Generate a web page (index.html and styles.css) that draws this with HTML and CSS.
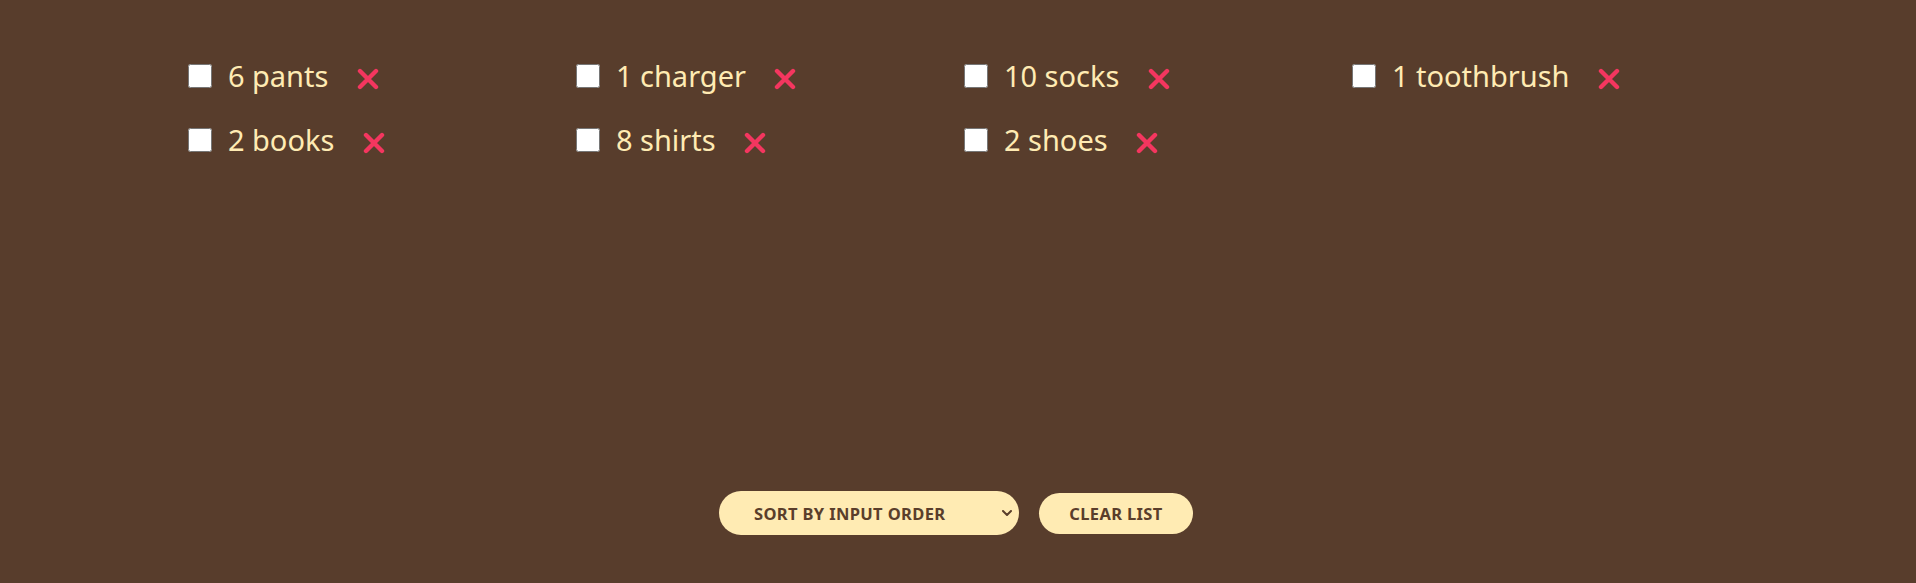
FILE: index.html
```html
<!DOCTYPE html>
<html lang="en">
<head>
<meta charset="utf-8">
<title>Far Away</title>
<link rel="stylesheet" href="styles.css">
</head>
<body>
<div class="list">
  <ul class="items">
    <li class="item"><input type="checkbox" class="check"><span class="label">6 pants</span><button class="remove" aria-label="remove"><svg class="x" viewBox="0 0 22 22"><path d="M3 3 L19 19 M19 3 L3 19"/></svg></button></li>
    <li class="item"><input type="checkbox" class="check"><span class="label">1 charger</span><button class="remove" aria-label="remove"><svg class="x" viewBox="0 0 22 22"><path d="M3 3 L19 19 M19 3 L3 19"/></svg></button></li>
    <li class="item"><input type="checkbox" class="check"><span class="label">10 socks</span><button class="remove" aria-label="remove"><svg class="x" viewBox="0 0 22 22"><path d="M3 3 L19 19 M19 3 L3 19"/></svg></button></li>
    <li class="item"><input type="checkbox" class="check"><span class="label">1 toothbrush</span><button class="remove" aria-label="remove"><svg class="x" viewBox="0 0 22 22"><path d="M3 3 L19 19 M19 3 L3 19"/></svg></button></li>
    <li class="item"><input type="checkbox" class="check"><span class="label">2 books</span><button class="remove" aria-label="remove"><svg class="x" viewBox="0 0 22 22"><path d="M3 3 L19 19 M19 3 L3 19"/></svg></button></li>
    <li class="item"><input type="checkbox" class="check"><span class="label">8 shirts</span><button class="remove" aria-label="remove"><svg class="x" viewBox="0 0 22 22"><path d="M3 3 L19 19 M19 3 L3 19"/></svg></button></li>
    <li class="item"><input type="checkbox" class="check"><span class="label">2 shoes</span><button class="remove" aria-label="remove"><svg class="x" viewBox="0 0 22 22"><path d="M3 3 L19 19 M19 3 L3 19"/></svg></button></li>
  </ul>
  <div class="actions">
    <div class="select-wrap">
      <select class="sort">
        <option>Sort by input order</option>
        <option>Sort by description</option>
        <option>Sort by packed status</option>
      </select>
      <svg class="chevron" viewBox="0 0 10 6"><path d="M1 1 L5 5 L9 1"/></svg>
    </div>
    <button class="clear">Clear list</button>
  </div>
</div>
</body>
</html>
```

FILE: styles.css
```css
* {
  box-sizing: border-box;
  margin: 0;
  padding: 0;
}

html, body {
  height: 100%;
}

body {
  background-color: #583d2c;
  font-family: "Noto Sans", "Open Sans", sans-serif;
  color: #ffebb3;
  overflow: hidden;
}

.list {
  height: 100%;
  display: flex;
  flex-direction: column;
  justify-content: space-between;
  padding: 51px 0 48px 0;
}

.items {
  list-style: none;
  margin-left: 188px;
  display: grid;
  grid-template-columns: repeat(4, 388px);
  row-gap: 14px;
  align-content: start;
}

.item {
  display: flex;
  align-items: center;
  gap: 14.4px;
  height: 50px;
  font-size: 29px;
}

.check {
  width: 24px;
  height: 24px;
  margin-right: 1.5px;
  flex: none;
}

.label {
  line-height: 1;
  transform: translateY(-1px);
}

.remove {
  background: none;
  border: none;
  padding: 0 0 0 14px;
  display: flex;
  transform: translateY(3px);
  cursor: pointer;
}

.x {
  width: 22px;
  height: 22px;
  fill: none;
  stroke: #f4365f;
  stroke-width: 4.4;
  stroke-linecap: round;
}

.actions {
  display: flex;
  justify-content: center;
  align-items: center;
  gap: 20px;
  padding-right: 4px;
}

.select-wrap {
  position: relative;
  display: flex;
}

.sort,
.clear {
  background-color: #ffebb3;
  color: #5a3e2b;
  font-family: "Noto Sans", "Open Sans", sans-serif;
  font-weight: 700;
  font-size: 16.5px;
  letter-spacing: 0.35px;
  text-transform: uppercase;
  border: none;
  border-radius: 100px;
}

.sort {
  appearance: none;
  -webkit-appearance: none;
  width: 300px;
  height: 44px;
  padding: 0 0 0 35px;
}

.chevron {
  position: absolute;
  right: 7px;
  top: 19px;
  width: 10px;
  height: 6px;
  fill: none;
  stroke: #5a3e2b;
  stroke-width: 2;
  stroke-linecap: round;
  stroke-linejoin: round;
  pointer-events: none;
}

.clear {
  width: 154px;
  height: 41px;
  padding: 0;
  cursor: pointer;
}
```
